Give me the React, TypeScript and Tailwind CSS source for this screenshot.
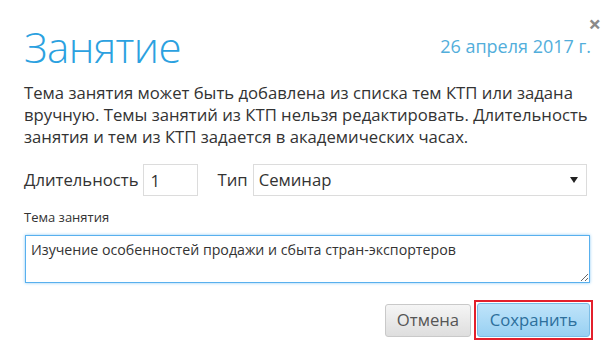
import { useState } from "react";

export default function App() {
  const [duration, setDuration] = useState("1");
  const [kind, setKind] = useState("Семинар");
  const [topic, setTopic] = useState("Изучение особенностей продажи и сбыта стран-экспортеров");

  return (
    <div className="relative w-[614px] h-[363px] bg-white px-6 text-[#333] font-['Open_Sans',sans-serif]">
      <button className="absolute right-[13px] top-[12px] text-[#8a8a8a] text-[22px] leading-none font-bold">×</button>

      <div className="flex justify-between items-start pt-[26px]">
        <h1 className="text-[42px] leading-none font-light text-[#2ba1e0] tracking-[-0.5px]">Занятие</h1>
        <div className="mt-[11px] -mr-[1px] text-[18px] leading-none text-[#52aedb]">26 апреля 2017 г.</div>
      </div>

      <p className="mt-[14px] text-[16.7px] leading-[22px]">
        Тема занятия может быть добавлена из списка тем КТП или задана вручную. Темы занятий из КТП нельзя
        редактировать. Длительность занятия и тем из КТП задается в академических часах.
      </p>

      <div className="mt-[16px] flex items-center h-[32px] text-[16.7px]">
        <span>Длительность</span>
        <input
          value={duration}
          onChange={(e) => setDuration(e.target.value)}
          className="ml-[5px] w-[55px] h-[32px] border border-[#dcdcdc] px-[6px] text-[16.7px] outline-none"
        />
        <span className="ml-[19px]">Тип</span>
        <div className="relative ml-[5px] w-[334px] h-[32px] border border-[#dcdcdc] flex items-center px-[5px]">
          <span>{kind}</span>
          <span className="absolute right-[8px] top-[12px] w-0 h-0 border-l-[4px] border-r-[4px] border-t-[6px] border-l-transparent border-r-transparent border-t-[#222]" onClick={() => setKind("Семинар")} />
        </div>
      </div>

      <div className="mt-[13px] text-[13px] leading-[16px]">Тема занятия</div>
      <textarea
        value={topic}
        onChange={(e) => setTopic(e.target.value)}
        className="block mt-[10px] ml-[1px] w-[565px] h-[48px] border border-[#58b0ee] shadow-[0_0_3px_#8ccaf5] px-[5px] py-[4px] text-[14.2px] leading-[20px] outline-none"
      />

      <div className="mt-[17px] -mr-[3px] flex justify-end items-center gap-[3px]">
        <button className="h-[33px] w-[86px] rounded-[3px] border border-[#c9c9c9] bg-gradient-to-b from-[#f5f5f5] to-[#dedede] text-[16.7px] text-[#555]">
          Отмена
        </button>
        <div className="border-2 border-[#e3202c] p-px">
          <button className="block h-[34px] w-[113px] rounded-[3px] border border-[#7bbde6] bg-gradient-to-b from-[#bfe4fa] to-[#98d0f2] text-[16.7px] text-[#2d6f9c]">
            Сохранить
          </button>
        </div>
      </div>
    </div>
  );
}
